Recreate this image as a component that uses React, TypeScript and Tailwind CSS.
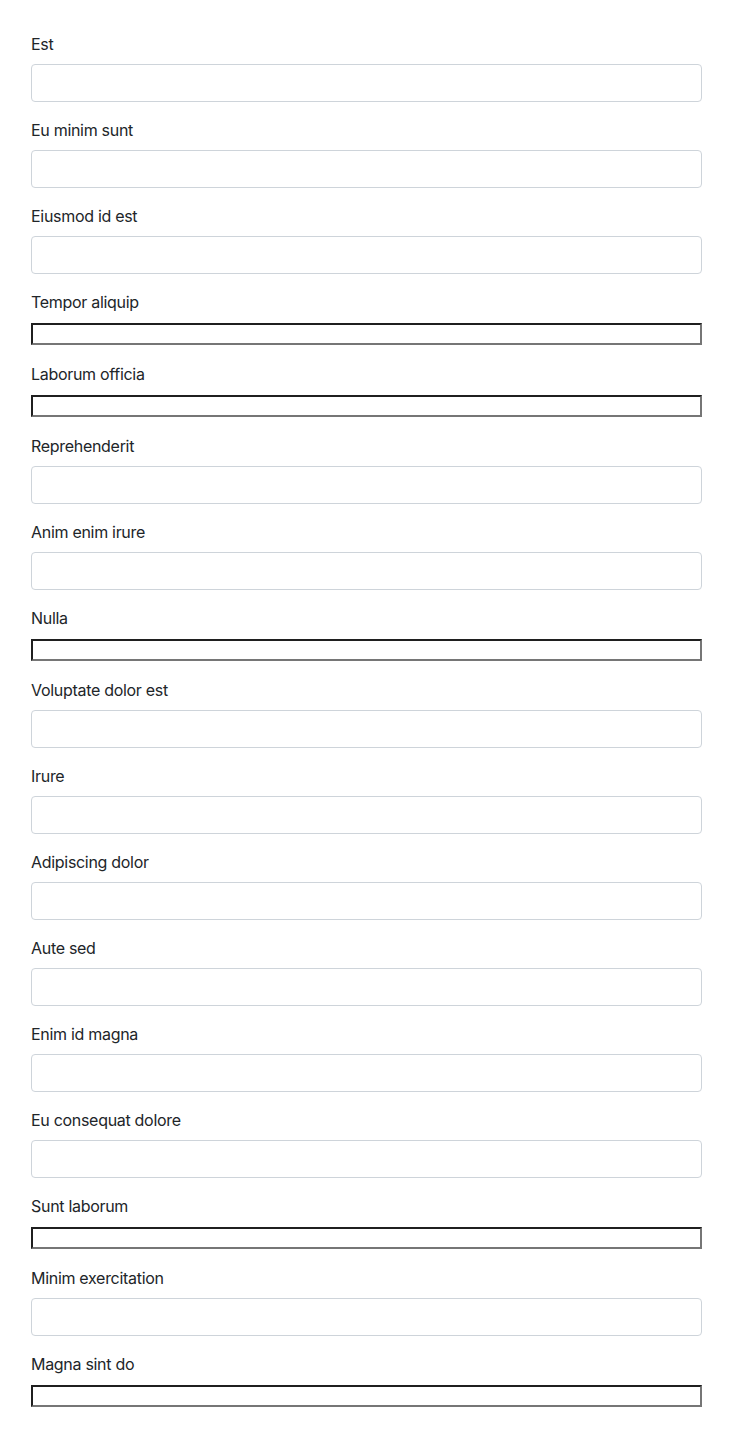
type Field = { label: string; plain?: boolean };

const fields: Field[] = [
  { label: "Est" },
  { label: "Eu minim sunt" },
  { label: "Eiusmod id est" },
  { label: "Tempor aliquip", plain: true },
  { label: "Laborum officia", plain: true },
  { label: "Reprehenderit" },
  { label: "Anim enim irure" },
  { label: "Nulla", plain: true },
  { label: "Voluptate dolor est" },
  { label: "Irure" },
  { label: "Adipiscing dolor" },
  { label: "Aute sed" },
  { label: "Enim id magna" },
  { label: "Eu consequat dolore" },
  { label: "Sunt laborum", plain: true },
  { label: "Minim exercitation" },
  { label: "Magna sint do", plain: true },
];

export default function App() {
  return (
    <div
      className="min-h-[1456px] bg-white px-[31px] pt-8 text-[16px] leading-6 tracking-[-0.3px] text-[#212529]"
      style={{ fontFamily: 'Inter, "Liberation Sans", Arial, sans-serif' }}
    >
      <form>
        {fields.map((f, i) => (
          <div key={i} className="mb-4">
            <label className="mb-2 block">{f.label}</label>
            {f.plain ? (
              <div className="h-6 pt-px">
                <input
                  className="block h-[22px] w-[671px] border-2 border-t-[#1f1f1f] border-l-[#1f1f1f] border-b-[#767676] border-r-[#767676] bg-white outline-none"
                />
              </div>
            ) : (
              <input
                className="block h-[38px] w-full rounded-[4px] border border-[#ced4da] bg-white px-3 outline-none"
              />
            )}
          </div>
        ))}
      </form>
    </div>
  );
}
